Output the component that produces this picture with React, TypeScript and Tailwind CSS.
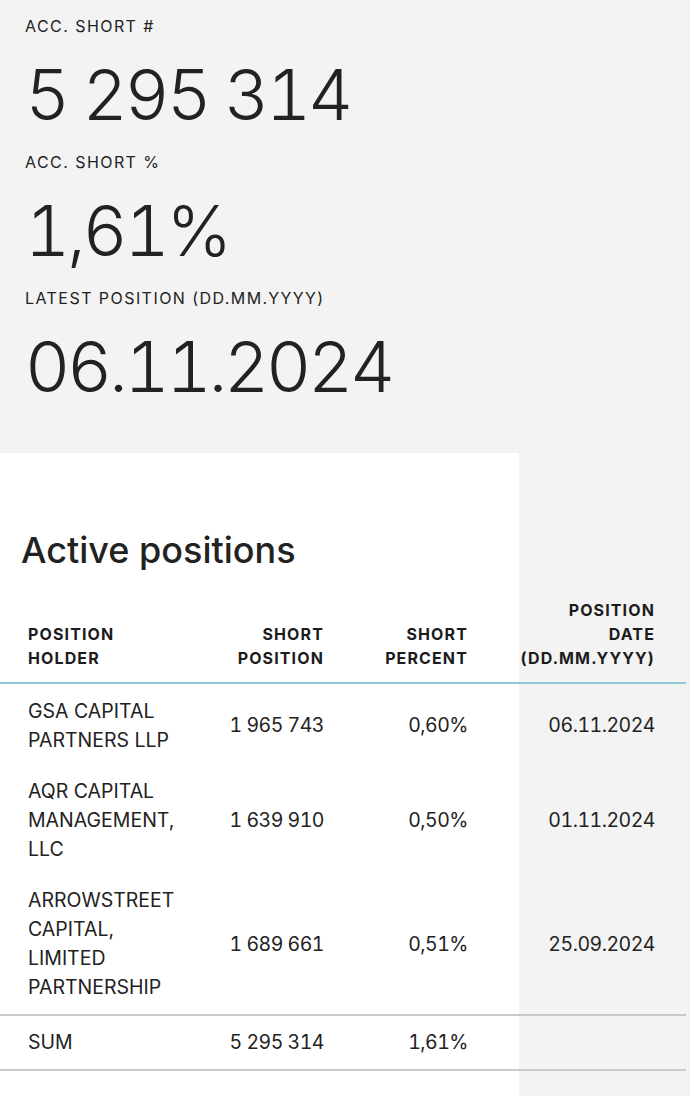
import React from "react";

interface Position {
  holder: string[];
  shares: string;
  percent: string;
  date: string;
}

const positions: Position[] = [
  {
    holder: ["GSA CAPITAL", "PARTNERS LLP"],
    shares: "1 965 743",
    percent: "0,60%",
    date: "06.11.2024",
  },
  {
    holder: ["AQR CAPITAL", "MANAGEMENT,", "LLC"],
    shares: "1 639 910",
    percent: "0,50%",
    date: "01.11.2024",
  },
  {
    holder: ["ARROWSTREET", "CAPITAL,", "LIMITED", "PARTNERSHIP"],
    shares: "1 689 661",
    percent: "0,51%",
    date: "25.09.2024",
  },
];

const Stat = ({ label, value, first }: { label: string; value: string; first?: boolean }) => (
  <div className={first ? "" : "mt-[15px]"}>
    <div className="text-[16px] leading-[20px] tracking-[0.09em] text-[#222]">{label}</div>
    <div className="mt-[17px] text-[70px] leading-[84px] font-light tabular-nums tracking-[-3.3px] text-[#222]">
      {value}
    </div>
  </div>
);

const App = () => {
  return (
    <div
      className="min-h-screen bg-[#f3f3f3] text-[#222]"
      style={{ fontFamily: "Inter, 'Noto Sans', sans-serif" }}
    >
      {/* Summary */}
      <div className="px-[25px] pt-[16px]">
        <Stat first label="ACC. SHORT #" value="5 295 314" />
        <Stat label="ACC. SHORT %" value="1,61%" />
        <Stat label="LATEST POSITION (DD.MM.YYYY)" value="06.11.2024" />
      </div>

      {/* Active positions */}
      <div className="mt-[44px] w-[519px] bg-white pt-[75px] pb-[60px]">
        <h2 className="pl-[21px] text-[36px] leading-[44px] font-medium text-[#222]">
          Active positions
        </h2>
        <table className="mt-[14px] w-[686px] table-fixed border-collapse">
          <colgroup>
            <col className="w-[200px]" />
            <col className="w-[140px]" />
            <col className="w-[144px]" />
            <col className="w-[202px]" />
          </colgroup>
          <thead>
            <tr className="border-b-2 border-[#8ccbd5] align-bottom text-[16px] leading-[24px] font-bold tracking-[0.07em] text-[#1c1c1c]">
              <th className="pl-[28px] pt-[12px] pb-[12px] text-left font-bold">
                POSITION
                <br />
                HOLDER
              </th>
              <th className="pr-[16px] pt-[12px] pb-[12px] text-right font-bold">
                SHORT
                <br />
                POSITION
              </th>
              <th className="pr-[16px] pt-[12px] pb-[12px] text-right font-bold">
                SHORT
                <br />
                PERCENT
              </th>
              <th className="pr-[31px] pt-[12px] pb-[12px] text-right font-bold">
                POSITION
                <br />
                DATE
                <br />
                (DD.MM.YYYY)
              </th>
            </tr>
          </thead>
          <tbody className="text-[19.5px] leading-[29px] text-[#222]">
            {positions.map((p, i) => (
              <tr key={i} className="align-middle">
                <td className={`pl-[28px] pb-[11px] ${i === 0 ? "pt-[13px]" : "pt-[11px]"} ${i === positions.length - 1 ? "pb-[12px]" : ""}`}>
                  {p.holder.map((line, j) => (
                    <div key={j}>{line}</div>
                  ))}
                </td>
                <td className="pr-[16px] text-right tabular-nums tracking-[-0.5px]">{p.shares}</td>
                <td className="pr-[16px] text-right tabular-nums tracking-[-0.5px]">{p.percent}</td>
                <td className="pr-[31px] text-right tabular-nums tracking-[-0.5px]">{p.date}</td>
              </tr>
            ))}
            <tr className="border-y-2 border-[#c6caca]">
              <td className="pl-[28px] py-[12px]">SUM</td>
              <td className="pr-[16px] py-[12px] text-right tabular-nums tracking-[-0.5px]">5 295 314</td>
              <td className="pr-[16px] py-[12px] text-right tabular-nums tracking-[-0.5px]">1,61%</td>
              <td className="pr-[31px] py-[12px]"></td>
            </tr>
          </tbody>
        </table>
      </div>
    </div>
  );
};

export default App;
